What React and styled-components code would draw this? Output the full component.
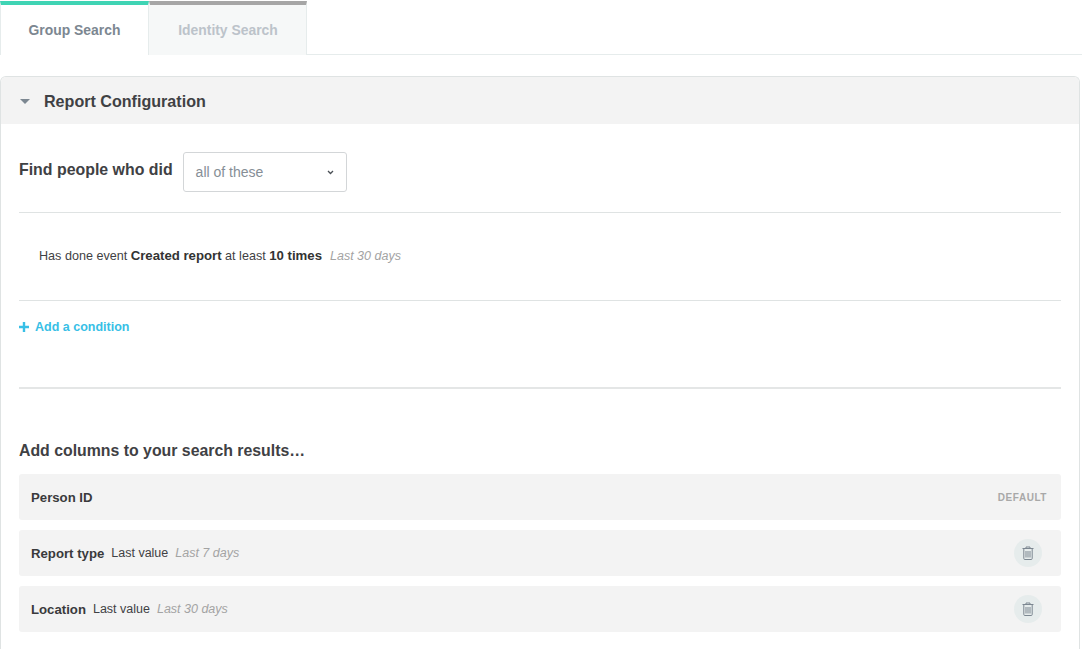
import React from "react";
import styled, { createGlobalStyle } from "styled-components";

const GlobalStyle = createGlobalStyle`
  html, body {
    margin: 0;
    padding: 0;
    height: 100%;
    overflow: hidden;
    background: #fff;
    font-family: "Liberation Sans", Arial, sans-serif;
    color: #3a3a3c;
  }
`;

const Page = styled.div`
  width: 1082px;
  height: 649px;
  overflow: hidden;
  padding-top: 1px;
  box-sizing: border-box;
`;

const Tabs = styled.div`
  display: flex;
  height: 54px;
  box-sizing: border-box;
  border-bottom: 1px solid #e6ecec;
`;

const Tab = styled.div`
  width: ${(props) => props.width}px;
  height: 54px;
  box-sizing: border-box;
  display: flex;
  align-items: center;
  justify-content: center;
  padding-bottom: 1px;
  font-size: 13.9px;
  font-weight: bold;
  border-top: 4px solid ${(props) => (props.active ? "#3fd4b4" : "#a6a6a6")};
  border-left: 1px solid ${(props) => (props.active ? "#e6ecec" : "transparent")};
  border-right: 1px solid #e6ecec;
  background: ${(props) => (props.active ? "#fff" : "#f6f8f8")};
  color: ${(props) => (props.active ? "#7c8791" : "#bcc3ca")};
`;

const Panel = styled.div`
  width: 1080px;
  margin-top: 21px;
  height: 640px;
  box-sizing: border-box;
  border: 1px solid #dfe3e3;
  border-bottom: 0;
  border-radius: 6px 6px 0 0;
  overflow: hidden;
`;

const PanelHeader = styled.div`
  height: 47px;
  box-sizing: border-box;
  display: flex;
  align-items: center;
  background: #f3f3f3;
  padding: 2px 0 0 19px;
  gap: 14px;
  font-size: 16.1px;
  font-weight: bold;
  color: #3f4144;
`;

const Caret = styled.span`
  width: 0;
  height: 0;
  border-left: 5px solid transparent;
  border-right: 5px solid transparent;
  border-top: 5px solid #7c8791;
`;

const PanelBody = styled.div`
  padding: 0 18px;
`;

const FindRow = styled.div`
  display: flex;
  align-items: flex-start;
  gap: 10px;
  padding: 28px 0 20px;
  border-bottom: 1px solid #dfe3e3;
`;

const FindLabel = styled.div`
  font-size: 15.9px;
  font-weight: bold;
  line-height: 18px;
  padding-top: 9px;
  color: #3f4144;
`;

const Select = styled.div`
  width: 164px;
  height: 40px;
  box-sizing: border-box;
  display: flex;
  align-items: center;
  justify-content: space-between;
  padding: 0 12px;
  border: 1px solid #d3d6d8;
  border-radius: 3px;
  font-size: 14px;
  color: #868e96;
`;

const ConditionRow = styled.div`
  height: 88px;
  box-sizing: border-box;
  display: flex;
  align-items: center;
  padding: 0 0 2px 20px;
  font-size: 12.6px;
  color: #3f4144;
  border-bottom: 1px solid #dfe3e3;
  white-space: pre;
`;

const Strong = styled.b`
  font-size: 13.2px;
  color: #333;
`;

const Muted = styled.i`
  font-size: 12.5px;
  color: #a3a3a3;
  margin-left: ${(props) => props.gap}px;
`;

const AddRow = styled.div`
  height: 88px;
  box-sizing: border-box;
  padding-top: 18px;
  display: flex;
  align-items: flex-start;
  gap: 6px;
  font-size: 12.5px;
  line-height: 16px;
  font-weight: bold;
  color: #38bfe6;
  border-bottom: 2px solid #e4e6e6;
`;

const ColumnsTitle = styled.div`
  margin-top: 52px;
  font-size: 15.85px;
  line-height: 20px;
  font-weight: bold;
  color: #3f4144;
`;

const Columns = styled.div`
  display: flex;
  flex-direction: column;
  gap: 10px;
  margin-top: 13px;
`;

const ColumnRow = styled.div`
  height: 46px;
  box-sizing: border-box;
  display: flex;
  align-items: center;
  padding: 0 19px 0 12px;
  background: #f3f3f3;
  border-radius: 3px;
  font-size: 12.5px;
  color: #3f4144;
`;

const ColumnName = styled.b`
  font-size: 13.2px;
  margin-right: 7px;
  color: #3a3a3c;
`;

const DefaultTag = styled.span`
  margin-left: auto;
  margin-right: -5px;
  font-size: 10px;
  font-weight: bold;
  letter-spacing: 0.55px;
  color: #a8a8a8;
`;

const TrashButton = styled.button`
  margin-left: auto;
  width: 28px;
  height: 28px;
  padding: 0;
  border: 0;
  border-radius: 50%;
  background: #e6ecec;
  display: flex;
  align-items: center;
  justify-content: center;
`;

function TrashIcon() {
  return (
    <svg width="12" height="14" viewBox="0 0 12 14" fill="none" stroke="#7c8791" strokeWidth="1">
      <path d="M0.5 2.500h11M4 2.500V1h4v1.500M1.800 2.500v10a1 1 0 0 0 1 1h6.400a1 1 0 0 0 1-1v-10" />
      <path d="M4 5v6.500M6 5v6.500M8 5v6.500" />
    </svg>
  );
}

function Chevron() {
  return (
    <svg width="7" height="5" viewBox="0 0 7 5" fill="none" stroke="#4a4f55" strokeWidth="1.300">
      <path d="M1 1l2.500 2.500L6 1" />
    </svg>
  );
}

function PlusIcon() {
  return (
    <svg width="10" height="16" viewBox="0 0 10 16" fill="none" stroke="#38bfe6" strokeWidth="2.400">
      <path d="M5 3v10M0 8h10" />
    </svg>
  );
}

export default function App() {
  return (
    <Page>
      <GlobalStyle />
      <Tabs>
        <Tab active width={149}>Group Search</Tab>
        <Tab width={158}>Identity Search</Tab>
      </Tabs>
      <Panel>
        <PanelHeader>
          <Caret />
          Report Configuration
        </PanelHeader>
        <PanelBody>
          <FindRow>
            <FindLabel>Find people who did</FindLabel>
            <Select>
              all of these
              <Chevron />
            </Select>
          </FindRow>
          <ConditionRow>
            Has done event <Strong>Created report</Strong> at least <Strong>10 times</Strong>
            <Muted gap={8}>Last 30 days</Muted>
          </ConditionRow>
          <AddRow>
            <PlusIcon />
            Add a condition
          </AddRow>
          <ColumnsTitle>Add columns to your search results…</ColumnsTitle>
          <Columns>
            <ColumnRow>
              <ColumnName>Person ID</ColumnName>
              <DefaultTag>DEFAULT</DefaultTag>
            </ColumnRow>
            <ColumnRow>
              <ColumnName>Report type</ColumnName>
              Last value
              <Muted gap={7}>Last 7 days</Muted>
              <TrashButton><TrashIcon /></TrashButton>
            </ColumnRow>
            <ColumnRow>
              <ColumnName>Location</ColumnName>
              Last value
              <Muted gap={7}>Last 30 days</Muted>
              <TrashButton><TrashIcon /></TrashButton>
            </ColumnRow>
          </Columns>
        </PanelBody>
      </Panel>
    </Page>
  );
}
